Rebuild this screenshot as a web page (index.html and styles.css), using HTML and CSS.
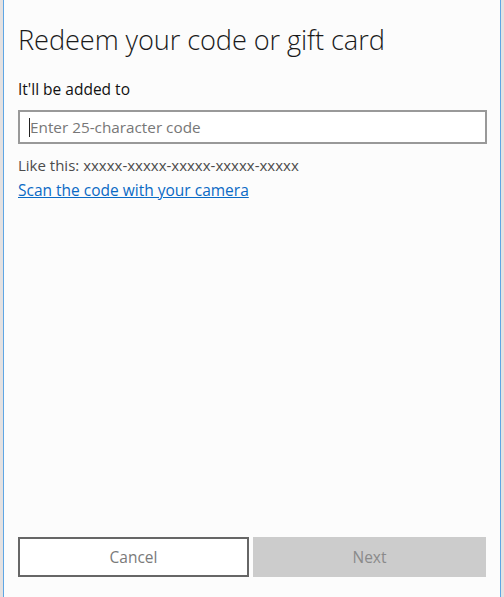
FILE: index.html
```html
<!DOCTYPE html>
<html lang="en">
<head>
<meta charset="utf-8">
<title>Redeem your code or gift card</title>
<link rel="stylesheet" href="styles.css">
</head>
<body>
<div class="dialog">
  <h1 class="title">Redeem your code or gift card</h1>
  <p class="added">It'll be added to</p>
  <div class="field"><span class="caret"></span><span class="placeholder">Enter 25-character code</span></div>
  <p class="hint">Like this: xxxxx-xxxxx-xxxxx-xxxxx-xxxxx</p>
  <a class="scan" href="#">Scan the code with your camera</a>
  <div class="actions">
    <button class="btn cancel">Cancel</button>
    <button class="btn next">Next</button>
  </div>
</div>
</body>
</html>
```

FILE: styles.css
```css
html, body {
  margin: 0;
  padding: 0;
  height: 100%;
}
body {
  background: #e4e1e1;
  font-family: "Open Sans", "Noto Sans", sans-serif;
}
.dialog {
  box-sizing: border-box;
  height: 597px;
  margin: 0 3px;
  border-left: 1px solid #5fa6e4;
  border-right: 1px solid #5fa6e4;
  background: #fcfcfc;
  padding: 0 13px 20px 14px;
  display: flex;
  flex-direction: column;
}
.title {
  margin: 22px 0 0 0;
  font-weight: 300;
  font-size: 27.2px;
  line-height: 36px;
  color: #1a1a1a;
  letter-spacing: -0.1px;
}
.added {
  margin: 21px 0 0 0;
  font-size: 15.5px;
  line-height: 20px;
  color: #111;
}
.field {
  margin-top: 11px;
  box-sizing: border-box;
  height: 34px;
  border: 2px solid #999;
  background: #fff;
  display: flex;
  align-items: center;
  padding-left: 9px;
}
.caret {
  width: 1px;
  height: 19px;
  background: #222;
}
.placeholder {
  font-size: 15.3px;
  color: #777;
}
.hint {
  margin: 11px 0 0 0;
  font-size: 15px;
  line-height: 20px;
  color: #4c4c4c;
}
.scan {
  align-self: flex-start;
  margin-top: 5px;
  font-size: 15.5px;
  line-height: 20px;
  color: #0a6ac5;
  text-decoration: underline;
}
.actions {
  margin-top: auto;
  display: grid;
  grid-template-columns: 231px 233px;
  gap: 4px;
}
.btn {
  height: 40px;
  box-sizing: border-box;
  font-family: inherit;
  font-size: 15.5px;
  color: #7a7a7a;
}
.cancel {
  background: #fff;
  border: 2px solid #666;
}
.next {
  background: #cccccc;
  border: none;
  color: #8a8a8a;
}
```
